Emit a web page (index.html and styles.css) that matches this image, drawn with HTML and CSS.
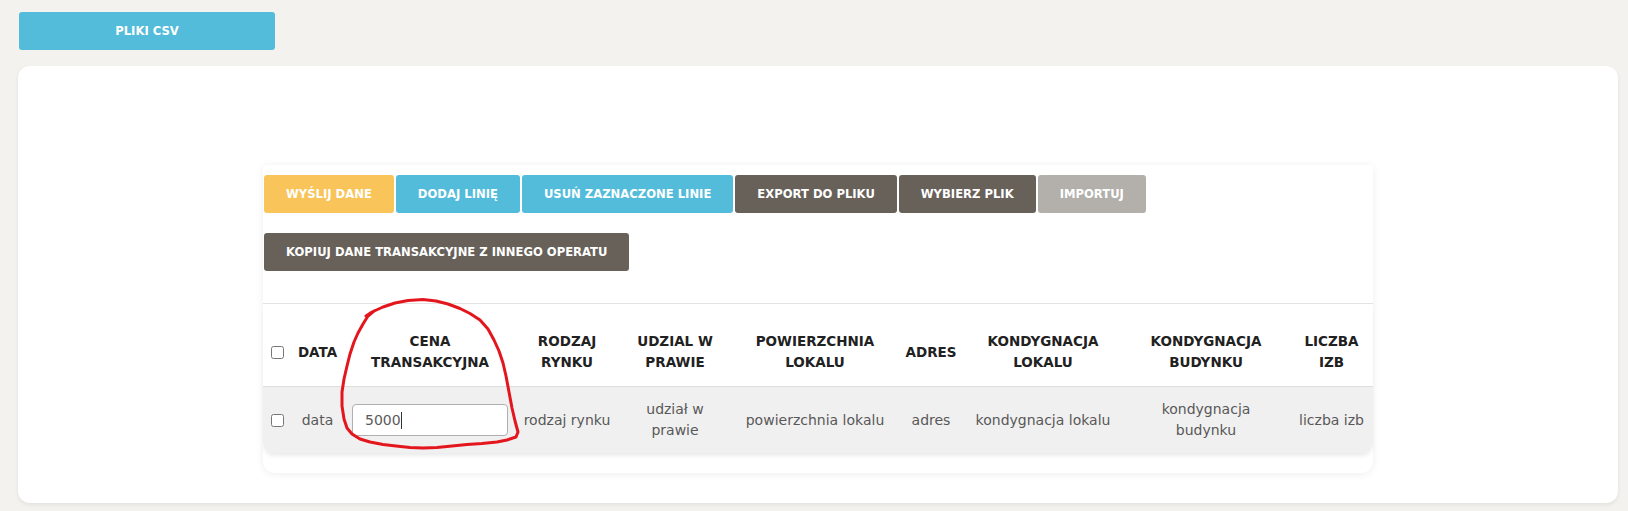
FILE: index.html
```html
<!DOCTYPE html>
<html lang="pl">
<head>
<meta charset="utf-8">
<title>Dane transakcyjne</title>
<link rel="stylesheet" href="styles.css">
</head>
<body>
<div class="page">
  <button class="btn btn-blue btn-csv">PLIKI CSV</button>
  <div class="card">
    <div class="panel">
      <div class="toolbar">
        <div class="btn-row">
          <button class="btn btn-yellow">WYŚLIJ DANE</button>
          <button class="btn btn-blue">DODAJ LINIĘ</button>
          <button class="btn btn-blue">USUŃ ZAZNACZONE LINIE</button>
          <button class="btn btn-dark">EXPORT DO PLIKU</button>
          <button class="btn btn-dark">WYBIERZ PLIK</button>
          <button class="btn btn-disabled">IMPORTUJ</button>
        </div>
        <div class="btn-row row2">
          <button class="btn btn-dark">KOPIUJ DANE TRANSAKCYJNE Z INNEGO OPERATU</button>
        </div>
      </div>
      <div class="table-wrap">
        <table class="grid">
          <colgroup>
            <col class="w-check">
            <col class="w-data">
            <col class="w-cena">
            <col class="w-rodzaj">
            <col class="w-udzial">
            <col class="w-pow">
            <col class="w-adres">
            <col class="w-kl">
            <col class="w-kb">
            <col>
          </colgroup>
          <thead>
            <tr>
              <th><input type="checkbox" class="chk"></th>
              <th>DATA</th>
              <th>CENA<br>TRANSAKCYJNA</th>
              <th>RODZAJ<br>RYNKU</th>
              <th>UDZIAL W<br>PRAWIE</th>
              <th>POWIERZCHNIA<br>LOKALU</th>
              <th>ADRES</th>
              <th>KONDYGNACJA<br>LOKALU</th>
              <th>KONDYGNACJA<br>BUDYNKU</th>
              <th>LICZBA<br>IZB</th>
            </tr>
          </thead>
          <tbody>
            <tr>
              <td><input type="checkbox" class="chk"></td>
              <td>data</td>
              <td><span class="price-field"><input type="text" class="price" value="5000"></span></td>
              <td>rodzaj rynku</td>
              <td>udział w<br>prawie</td>
              <td>powierzchnia lokalu</td>
              <td>adres</td>
              <td>kondygnacja lokalu</td>
              <td>kondygnacja<br>budynku</td>
              <td>liczba izb</td>
            </tr>
          </tbody>
        </table>
      </div>
    </div>
  </div>
  <svg class="annotation" viewBox="0 0 1628 511" aria-hidden="true">
    <path d="M366,316 L372,312 L383,307 L395,303 L408,300.5 L423,299.5 L436,301 L448,304 L460,308.5 L470,313.5 L480,320 L488,329 L494,340 L499,351 L503,363 L506,376 L509,392 L512,408 L515,421 L518,432 L516,437 L507,440 L497,442 L482,443.5 L467,444.5 L452,446 L437,447.5 L423,448 L410,447.5 L396,446 L383,444.5 L370,442 L360,439 L352,434 L347,428 L344,419 L342,406 L342,392 L344,379 L347,366 L350,354 L354,342 L358,333 L363,324 L368,316 L374,311"/>
  </svg>
</div>
</body>
</html>
```

FILE: styles.css
```css
* {
  box-sizing: border-box;
}

body {
  margin: 0;
  background: #f3f2ee;
  font-family: "DejaVu Sans", "Noto Sans", sans-serif;
}

.page {
  position: relative;
  padding: 12px 10px 8px 18px;
}

.btn {
  height: 38px;
  padding: 0 22px;
  border: none;
  border-radius: 3px;
  color: #fff;
  font-family: "DejaVu Sans", "Noto Sans", sans-serif;
  font-weight: 700;
  font-size: 11.6px;
  white-space: nowrap;
  cursor: pointer;
}

.btn-blue {
  background: #52bcda;
}

.btn-yellow {
  background: #f9c55a;
}

.btn-dark {
  background: #676159;
}

.btn-disabled {
  background: #b3afab;
}

.btn-csv {
  display: block;
  width: 256px;
  margin-left: 1px;
}

.card {
  margin-top: 16px;
  background: #fff;
  border-radius: 12px;
  padding: 99px 0 30px;
  box-shadow: 0 2px 4px rgba(0, 0, 0, 0.07);
}

.panel {
  width: 1110px;
  margin: 0 auto;
  background: #fff;
  border-radius: 3px 3px 12px 12px;
  box-shadow: 0 1px 8px rgba(0, 0, 0, 0.07);
  padding: 10px 0 20px;
}

.toolbar {
  padding-left: 1px;
}

.btn-row {
  display: flex;
  gap: 2px;
}

.row2 {
  margin-top: 20px;
}

.table-wrap {
  margin-top: 32px;
  border-top: 1px solid #e3e3e3;
  border-radius: 0 0 10px 10px;
  overflow: hidden;
  box-shadow: 0 4px 5px -2px rgba(0, 0, 0, 0.1);
}

.grid {
  width: 100%;
  border-collapse: collapse;
  table-layout: fixed;
}

.w-check { width: 28px; }
.w-data { width: 53px; }
.w-cena { width: 172px; }
.w-rodzaj { width: 102px; }
.w-udzial { width: 114px; }
.w-pow { width: 166px; }
.w-adres { width: 66px; }
.w-kl { width: 158px; }
.w-kb { width: 168px; }

.grid th {
  padding: 27px 2px 13px;
  line-height: 21px;
  font-size: 13.5px;
  font-weight: 700;
  color: #212121;
  text-align: center;
  vertical-align: middle;
  white-space: nowrap;
  background: #fff;
}

.grid td {
  padding: 12px 2px;
  border-top: 1px solid #dedede;
  background: #f1f0f0;
  line-height: 21px;
  font-size: 14px;
  color: #585858;
  text-align: center;
  vertical-align: middle;
  white-space: nowrap;
}

.chk {
  width: 13px;
  height: 13px;
  margin: 0;
  vertical-align: middle;
}

.price-field {
  position: relative;
  display: inline-block;
  vertical-align: middle;
}

.price-field::after {
  content: "";
  position: absolute;
  left: 49px;
  top: 8px;
  width: 1px;
  height: 17px;
  background: #333;
}

.price {
  display: block;
  width: 156px;
  height: 32px;
  padding: 0 12px;
  border: 1px solid #b0b0b0;
  border-radius: 4px;
  background: #fff;
  font-family: "DejaVu Sans", "Noto Sans", sans-serif;
  font-size: 14px;
  color: #5a5a5a;
}

.annotation {
  position: absolute;
  top: 0;
  left: 0;
  width: 1628px;
  height: 511px;
  pointer-events: none;
  fill: none;
  stroke: #e4161d;
  stroke-width: 3;
  stroke-linejoin: round;
  stroke-linecap: round;
}
```
